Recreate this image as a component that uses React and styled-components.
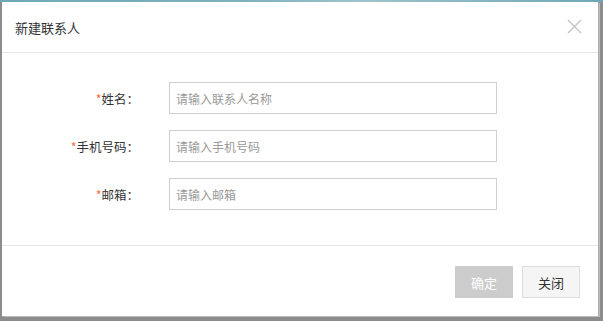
import React from "react";
import styled, { createGlobalStyle } from "styled-components";

const GlobalStyle = createGlobalStyle`
  html, body {
    margin: 0;
    padding: 0;
    background: #8c8c8c;
  }
  body {
    font-family: "Noto Sans CJK SC", "Noto Sans", sans-serif;
    color: #333;
  }
`;

const fields = [
  { label: "姓名", placeholder: "请输入联系人名称" },
  { label: "手机号码", placeholder: "请输入手机号码" },
  { label: "邮箱", placeholder: "请输入邮箱" },
];

const App = () => (
  <Page>
    <GlobalStyle />
    <Backdrop />
    <Dialog>
      <Header>
        <Title>新建联系人</Title>
        <CloseButton aria-label="关闭">
          <svg width="15" height="15" viewBox="0 0 15 15">
            <path d="M1 1 L14 14 M14 1 L1 14" stroke="#c4c4c4" strokeWidth="1.4" fill="none" />
          </svg>
        </CloseButton>
      </Header>
      <Body>
        {fields.map((f) => (
          <Row key={f.label}>
            <Label>
              <Required>*</Required>
              {f.label}：
            </Label>
            <Input placeholder={f.placeholder} />
          </Row>
        ))}
      </Body>
      <Footer>
        <Button primary>确定</Button>
        <Button>关闭</Button>
      </Footer>
    </Dialog>
  </Page>
);

const Page = styled.div`
  display: flex;
  flex-direction: column;
  width: 603px;
  height: 321px;
  background: #8c8c8c;
`;

const Backdrop = styled.div`
  height: 2px;
  background: linear-gradient(90deg, #6ea8b6 0%, #7db1bd 40%, #9fc3cb 60%, #6ea8b6 100%);
`;

const Dialog = styled.div`
  display: flex;
  flex-direction: column;
  width: 596px;
  height: 314px;
  margin-left: 2px;
  background: #fff;
  box-shadow: 1px 0 0 #a8a8a8, 2px 1px 0 #bdbdbd, 0 1px 0 #a8a8a8;
`;

const Header = styled.div`
  display: flex;
  align-items: center;
  justify-content: space-between;
  height: 50px;
  padding: 0 16px 0 13px;
  border-bottom: 1px solid #e5e5e5;
`;

const Title = styled.span`
  font-size: 13px;
  color: #333;
`;

const CloseButton = styled.span`
  display: flex;
  margin-top: -2px;
`;

const Body = styled.div`
  display: flex;
  flex-direction: column;
  gap: 16px;
  padding: 29px 0 35px;
  border-bottom: 1px solid #e5e5e5;
`;

const Row = styled.div`
  display: flex;
  align-items: center;
`;

const Label = styled.label`
  width: 137px;
  margin-right: 30px;
  text-align: right;
  font-size: 12.5px;
  color: #333;
`;

const Required = styled.span`
  color: #f56c3a;
`;

const Input = styled.input`
  box-sizing: border-box;
  width: 328px;
  height: 32px;
  padding: 0 6px;
  border: 1px solid #cfcfcf;
  outline: none;
  font-family: inherit;
  font-size: 12px;
  color: #333;
  &::placeholder {
    color: #999;
  }
`;

const Footer = styled.div`
  flex: 1;
  display: flex;
  justify-content: flex-end;
  align-items: flex-start;
  gap: 9px;
  padding: 20px 18px 0 0;
`;

const Button = styled.button`
  box-sizing: border-box;
  width: 58px;
  height: 32px;
  border: 1px solid ${(p) => (p.primary ? "#cccccc" : "#dddddd")};
  background: ${(p) => (p.primary ? "#cccccc" : "#f5f5f5")};
  color: ${(p) => (p.primary ? "#fff" : "#333")};
  font-family: inherit;
  font-size: 13px;
  padding: 0;
`;

export default App;
